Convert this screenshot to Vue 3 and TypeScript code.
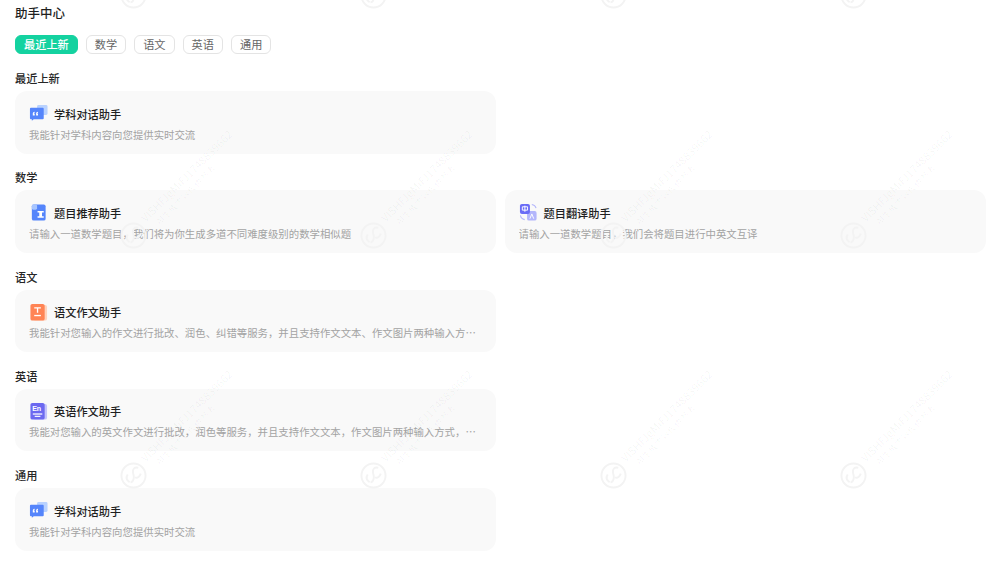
<script setup lang="ts">
type Item = { icon: string; title: string; desc: string }
type Section = { name: string; items: Item[] }
const chat: Item = { icon: 'chat', title: '学科对话助手', desc: '我能针对学科内容向您提供实时交流' }
const sections: Section[] = [
  { name: '最近上新', items: [chat] },
  { name: '数学', items: [
    { icon: 'sigma', title: '题目推荐助手', desc: '请输入一道数学题目，我们将为你生成多道不同难度级别的数学相似题' },
    { icon: 'trans', title: '题目翻译助手', desc: '请输入一道数学题目，我们会将题目进行中英文互译' },
  ] },
  { name: '语文', items: [
    { icon: 'text', title: '语文作文助手', desc: '我能针对您输入的作文进行批改、润色、纠错等服务，并且支持作文文本、作文图片两种输入方式，让您的写作更加轻松高效' },
  ] },
  { name: '英语', items: [
    { icon: 'en', title: '英语作文助手', desc: '我能对您输入的英文作文进行批改，润色等服务，并且支持作文文本，作文图片两种输入方式，让您的写作更加轻松高效' },
  ] },
  { name: '通用', items: [chat] },
]
const tags = ['最近上新', '数学', '语文', '英语', '通用']
const marks = Array.from({ length: 12 }, (_, i) => i)
</script>

<template>
  <div class="page">
    <h1 class="title">助手中心</h1>
    <div class="tags">
      <span v-for="(t, i) in tags" :key="t" class="tag" :class="{ active: i === 0 }">{{ t }}</span>
    </div>
    <section v-for="s in sections" :key="s.name" class="section">
      <h2 class="label">{{ s.name }}</h2>
      <div class="grid">
        <div v-for="c in s.items" :key="c.title" class="card">
          <div class="head">
            <svg class="icon" viewBox="0 0 20 20" aria-hidden="true">
              <template v-if="c.icon === 'chat'">
                <rect x="8.500" y="1" width="11" height="10.500" rx="1.500" fill="#b9d2ff" />
                <path d="M2 4h12.500a1 1 0 0 1 1 1v10a1 1 0 0 1-1 1H5l-2 1.600V16H2a1 1 0 0 1-1-1V5a1 1 0 0 1 1-1z" fill="#5585fb" />
                <path d="M4 12V9.800q0-1.500 2-1.600v1q-.9 0-.9.900H6V12zM7.500 12V9.800q0-1.500 2-1.600v1q-.9 0-.9.900h.9V12z" fill="#fff" />
              </template>
              <template v-else-if="c.icon === 'sigma'">
                <rect x="3" y="1.500" width="14.500" height="17" rx="2" fill="#5585fb" />
                <rect x="3" y="1.500" width="5.500" height="5.500" rx="1.500" fill="#a8c6ff" />
                <path d="M9 8.500h6.500v1.600h-1.800v3.800h1.800v1.600H9v-1.600h1.800v-3.800H9z" fill="#fff" />
              </template>
              <template v-else-if="c.icon === 'trans'">
                <rect x="8.500" y="8.500" width="10" height="10" rx="2" fill="#b3b6fb" />
                <rect x="1" y="1" width="10.500" height="10.500" rx="2" fill="#6a6cf6" />
                <path d="M3.500 4h5.500v3.500H3.500zM6.200 2.800v6.400" fill="none" stroke="#fff" stroke-width="1" />
                <path d="M11.500 16.500l2-5 2 5" fill="none" stroke="#fff" stroke-width="1" />
                <path d="M13.500 1.500q3.500.5 4.500 4M1.500 13q.5 3.500 4.500 4.500" fill="none" stroke="#b3b6fb" stroke-width="1.100" />
              </template>
              <template v-else-if="c.icon === 'text'">
                <rect x="5" y="2" width="14" height="16.500" rx="2" fill="#ffd3bd" />
                <rect x="1.500" y="1" width="15" height="17.500" rx="2" fill="#ff8455" />
                <path d="M5.500 4.500h7v1.400H9.700v4.400H8.300V5.900H5.500z" fill="#fff" />
                <rect x="5.500" y="12.500" width="7" height="1.400" fill="#fff" />
              </template>
              <template v-else>
                <rect x="5" y="2" width="14" height="16.500" rx="2" fill="#c4c4fb" />
                <rect x="1.500" y="1" width="15" height="17.500" rx="2" fill="#6c69f0" />
                <text x="3.300" y="9.500" class="en">En</text>
                <rect x="4" y="12" width="10" height="1.300" fill="#fff" />
                <rect x="6" y="14.500" width="6" height="1.200" fill="#fff" />
              </template>
            </svg>
            <span class="name">{{ c.title }}</span>
          </div>
          <p class="desc">{{ c.desc }}</p>
        </div>
      </div>
    </section>
    <div class="marks" aria-hidden="true">
      <div v-for="m in marks" :key="m" class="mark">
        <svg class="logo" viewBox="0 0 28 28">
          <circle cx="14" cy="14" r="12.500" fill="none" stroke="#f3f3f3" stroke-width="2" />
          <path d="M19 6c-4-1-6 1-5.500 5 .5 3 1.500 4 .5 7-.5 2-2 3-3 3M8 13c-2 3-1 6 2 8M15.500 16c3 1 5-1 6-4" fill="none" stroke="#f3f3f3" stroke-width="2" />
        </svg>
        <div class="mark-text">
          <div class="mark-id">VISHFJgMiFJ1748839662</div>
          <div class="mark-note">AI生成内容仅供参考</div>
        </div>
      </div>
    </div>
  </div>
</template>

<style scoped>
.page {
  position: relative;
  width: 988px;
  height: 564px;
  overflow: hidden;
  box-sizing: border-box;
  padding: 5px 3px 0 15px;
  background: #fff;
  font-family: "Noto Sans CJK SC", "Noto Sans", sans-serif;
}
.title {
  margin: 0;
  font-size: 12.500px;
  line-height: 16px;
  font-weight: 500;
  color: #1f1f1f;
}
.tags {
  display: flex;
  gap: 8px;
  margin-top: 14px;
}
.tag {
  box-sizing: border-box;
  height: 19px;
  padding: 0 8px;
  border: 1px solid #e4e4e4;
  border-radius: 6px;
  font-size: 11.200px;
  line-height: 17px;
  color: #666;
}
.tag.active {
  border-color: #14d2a0;
  background: #14d2a0;
  color: #fff;
  font-weight: 500;
}
.section {
  margin-top: 16px;
}
.section + .section {
  margin-top: 15.750px;
}
.label {
  margin: 0 0 5px;
  font-size: 11.200px;
  line-height: 16px;
  font-weight: 500;
  color: #262626;
}
.grid {
  display: grid;
  grid-template-columns: 481px 481px;
  gap: 8.500px;
}
.card {
  box-sizing: border-box;
  height: 62.500px;
  padding: 13px 14px 0;
  border-radius: 12px;
  background: #f9f9f9;
}
.head {
  display: flex;
  align-items: center;
  gap: 6px;
  height: 19px;
}
.icon {
  flex: none;
  width: 19px;
  height: 19px;
}
.en {
  font-size: 7.500px;
  font-weight: 700;
  font-family: "Liberation Sans", sans-serif;
  fill: #fff;
}
.name {
  font-size: 11.200px;
  font-weight: 500;
  color: #1f1f1f;
}
.desc {
  margin: 3.500px 0 0;
  font-size: 10.400px;
  line-height: 15px;
  color: #a3a3a3;
  white-space: nowrap;
  overflow: hidden;
  text-overflow: ellipsis;
}
.marks {
  position: absolute;
  left: 120px;
  top: -18px;
  display: grid;
  grid-template-columns: repeat(4, 240px);
  grid-auto-rows: 240px;
  pointer-events: none;
}
.mark {
  position: relative;
}
.logo {
  position: absolute;
  left: 0;
  top: 0;
  width: 27px;
  height: 27px;
}
.mark-text {
  position: absolute;
  left: 18px;
  top: -7px;
  transform: rotate(-45deg);
  transform-origin: 0 0;
  color: rgba(0, 0, 0, 0.045);
  white-space: nowrap;
}
.mark-id {
  font-size: 11px;
  line-height: 13px;
}
.mark-note {
  padding-left: 8px;
  font-size: 9px;
  line-height: 13px;
}
</style>
